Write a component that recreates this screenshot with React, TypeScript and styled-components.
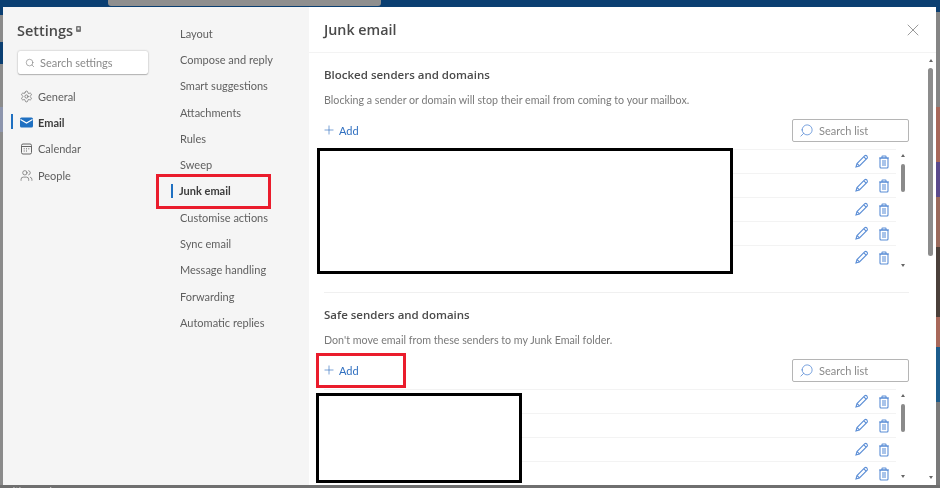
import styled, { createGlobalStyle } from "styled-components";
import { Settings, Users, Plus, X, Search } from "lucide-react";

const Global = createGlobalStyle`
  html, body {
    margin: 0;
    padding: 0;
    background: #8a8a8a;
  }
`;

const Page = styled.div`
  position: relative;
  width: 940px;
  height: 488px;
  overflow: hidden;
  display: flex;
  flex-direction: column;
  font-family: Lato, "Open Sans", sans-serif;
  filter: blur(0.3px);
`;

const TopBar = styled.div`
  height: 7px;
  background: #0b3f72;
  flex: none;
  display: flex;
`;

const BrowserTab = styled.div`
  width: 273px;
  height: 6px;
  margin-left: 108px;
  background: #8f8f8f;
  border-radius: 0 0 3px 3px;
`;

const Middle = styled.div`
  flex: 1;
  min-height: 0;
  display: flex;
`;

const LeftEdge = styled.div`
  width: 3px;
  flex: none;
  background: linear-gradient(
    180deg,
    #0b3f72 0 8px,
    #8b8b8b 8px 35px,
    #0b3f72 35px 57px,
    #8b8b8b 57px 100px,
    #8d95ad 100px 125px,
    #8b8b8b 125px
  );
`;

const RightEdge = styled.div`
  width: 4px;
  flex: none;
  background: linear-gradient(
    180deg,
    #0b3f72 0 5px,
    #858585 5px 100px,
    #a8685a 100px 155px,
    #5b4a8c 155px 190px,
    #9a6a5c 190px 240px,
    #4b403a 240px 310px,
    #a8685a 310px 340px,
    #1c5c8c 340px 395px,
    #7a7a7a 395px
  );
`;

const BottomBar = styled.div`
  height: 3px;
  flex: none;
  background: #6f6f6f;
  overflow: hidden;
  padding-left: 5px;
  font-size: 10px;
  line-height: 10px;
  color: #d0d0d0;
`;

const Dialog = styled.div`
  flex: 1;
  min-width: 0;
  display: flex;
  background: #ffffff;
`;

const NavPanel = styled.nav`
  width: 306px;
  flex: none;
  display: flex;
  background: #f5f5f5;
`;

const PrimaryColumn = styled.div`
  width: 149px;
  flex: none;
  padding: 13px 0 0 14px;
  box-sizing: border-box;
`;

const TitleRow = styled.div`
  display: flex;
  align-items: flex-start;
  gap: 3px;
  height: 20px;
  margin-top: 1px;
`;

const Title = styled.h1`
  margin: 0;
  font-family: "Open Sans", sans-serif;
  font-size: 14.5px;
  line-height: 20px;
  font-weight: 600;
  color: #4a4a4a;
`;

const SettingsSearch = styled.div`
  width: 130px;
  height: 23px;
  margin: 10px 0 9px 1px;
  padding-left: 7px;
  box-sizing: border-box;
  display: flex;
  align-items: center;
  gap: 5px;
  background: #ffffff;
  border-radius: 2px;
  box-shadow: 0 0 2px rgba(0, 0, 0, 0.3), 0 1px 1px rgba(0, 0, 0, 0.2);
  font-size: 11px;
  color: #8a8a8a;
`;

const PrimaryItem = styled.div<{ $active?: boolean }>`
  position: relative;
  height: 26.3px;
  display: flex;
  align-items: center;
  gap: 5px;
  padding-left: 3px;
  font-size: 11px;
  font-weight: ${(p) => (p.$active ? 700 : 400)};
  color: ${(p) => (p.$active ? "#3d3d3d" : "#5f5f5f")};

  ${(p) =>
    p.$active &&
    `&::before {
      content: "";
      position: absolute;
      left: -6px;
      top: 5px;
      width: 2px;
      height: 15px;
      background: #1f70c1;
    }`}
`;

const SecondaryColumn = styled.div`
  flex: 1;
  padding: 13px 0 0 28px;
`;

const SecondaryItem = styled.div<{ $active?: boolean }>`
  position: relative;
  height: 26.3px;
  display: flex;
  align-items: center;
  font-size: 11px;
  font-weight: ${(p) => (p.$active ? 700 : 400)};
  color: ${(p) => (p.$active ? "#3d3d3d" : "#5f5f5f")};
  margin-left: ${(p) => (p.$active ? "-1px" : "0")};

  ${(p) =>
    p.$active &&
    `&::before {
      content: "";
      position: absolute;
      left: -8px;
      top: 6px;
      width: 2px;
      height: 14px;
      background: #1f70c1;
    }`}
`;

const Content = styled.main`
  flex: 1;
  min-width: 0;
  display: flex;
  flex-direction: column;
`;

const Header = styled.header`
  height: 46px;
  flex: none;
  box-sizing: border-box;
  padding: 0 13px 0 15px;
  display: flex;
  align-items: center;
  justify-content: space-between;
  border-bottom: 1px solid #f3f3f3;
`;

const HeaderTitle = styled.h2`
  margin: 0;
  font-family: "Open Sans", sans-serif;
  font-size: 14.3px;
  font-weight: 600;
  color: #4a4a4a;
`;

const ScrollArea = styled.div`
  flex: 1;
  min-height: 0;
  display: flex;
`;

const Sections = styled.div`
  flex: 1;
  min-width: 0;
  padding: 0 16px 0 15px;
  overflow: hidden;
`;

const Section = styled.section<{ $divided?: boolean }>`
  padding-top: 12px;
  border-top: ${(p) => (p.$divided ? "1px solid #f0f0f0" : "none")};
  margin-top: ${(p) => (p.$divided ? "23px" : "0")};
`;

const SectionTitle = styled.h3`
  margin: 0;
  height: 20px;
  font-family: "Open Sans", sans-serif;
  font-size: 11.5px;
  line-height: 20px;
  font-weight: 600;
  color: #4a4a4a;
`;

const Description = styled.p`
  margin: 5px 0 0;
  height: 20px;
  font-size: 10.7px;
  line-height: 20px;
  color: #7a7a7a;
`;

const ToolRow = styled.div`
  height: 24px;
  margin-top: 8px;
  display: flex;
  align-items: center;
  justify-content: space-between;
`;

const AddButton = styled.div`
  display: flex;
  align-items: center;
  gap: 3px;
  color: #2f6fc0;
  font-size: 11px;
`;

const AddPlus = styled(Plus)`
  margin-left: -2px;
`;

const ListSearch = styled.div`
  width: 117px;
  height: 23px;
  box-sizing: border-box;
  padding-left: 6px;
  display: flex;
  align-items: center;
  gap: 5px;
  border: 1px solid #b5b5b5;
  border-radius: 2px;
  color: #8a8a8a;
  font-size: 11px;
`;

const FlippedSearch = styled(Search)`
  transform: scaleX(-1);
`;

const ListWrap = styled.div<{ $tall?: boolean }>`
  margin-top: 7px;
  height: ${(p) => (p.$tall ? "120px" : "96px")};
  display: flex;
`;

const Rows = styled.div`
  width: 572px;
  flex: none;
`;

const Row = styled.div`
  height: 24px;
  box-sizing: border-box;
  border-top: 1px solid #f3f3f3;
  display: flex;
  align-items: center;
  justify-content: flex-end;
  gap: 9px;
  padding-right: 6px;
`;

const MiniScroll = styled.div`
  width: 13px;
  flex: none;
  display: flex;
  flex-direction: column;
  align-items: center;
  position: relative;
`;

const Arrow = styled.span<{ $down?: boolean; $top: number }>`
  position: absolute;
  top: ${(p) => p.$top}px;
  width: 0;
  height: 0;
  border-left: 2px solid transparent;
  border-right: 2px solid transparent;
  ${(p) => (p.$down ? "border-top: 3px solid #666;" : "border-bottom: 3px solid #666;")}
`;

const MiniThumb = styled.div<{ $height: number; $top: number }>`
  position: absolute;
  top: ${(p) => p.$top}px;
  width: 4px;
  height: ${(p) => p.$height}px;
  border-radius: 2px;
  background: #8a8a8a;
`;

const MainScroll = styled.div`
  width: 11px;
  flex: none;
  position: relative;
  display: flex;
  justify-content: center;
`;

const MainThumb = styled.div`
  position: absolute;
  top: 15px;
  width: 5px;
  height: 188px;
  border-radius: 3px;
  background: #8c8c8c;
`;

const Redaction = styled.div<{ $x: number; $y: number; $w: number; $h: number }>`
  position: absolute;
  left: ${(p) => p.$x}px;
  top: ${(p) => p.$y}px;
  width: ${(p) => p.$w}px;
  height: ${(p) => p.$h}px;
  box-sizing: border-box;
  background: #ffffff;
  border: 3px solid #000000;
`;

const Highlight = styled.div<{ $x: number; $y: number; $w: number; $h: number }>`
  position: absolute;
  left: ${(p) => p.$x}px;
  top: ${(p) => p.$y}px;
  width: ${(p) => p.$w}px;
  height: ${(p) => p.$h}px;
  box-sizing: border-box;
  border: 3px solid #ea1c2c;
`;

const PencilIcon = () => (
  <svg width="15" height="15" viewBox="0 0 15 15" fill="none" stroke="#5b8ed6" strokeWidth="1.1">
    <path d="M2 13 L3 9.5 L10.8 1.7 Q11.8 1 12.9 2 Q13.8 3.1 13.2 4.1 L5.4 11.9 Z" />
    <path d="M9.8 2.8 L12.2 5.2" />
    <path d="M3 9.5 L5.4 11.9" />
  </svg>
);

const TrashIcon = () => (
  <svg width="12" height="14" viewBox="0 0 12 14" fill="none" stroke="#5b8ed6" strokeWidth="1.1">
    <path d="M1 3 H11" />
    <path d="M4 3 V1.5 Q4 1 4.5 1 H7.5 Q8 1 8 1.5 V3" />
    <rect x="2" y="3" width="8" height="10" rx="1" />
    <rect x="4" y="5" width="4" height="6" fill="#a9c4ea" stroke="none" />
  </svg>
);

const MailIcon = () => (
  <svg width="13" height="11" viewBox="0 0 13 11">
    <rect x="0" y="0.5" width="13" height="10" rx="1.5" fill="#1f70c1" />
    <path d="M0.5 2.5 L6.5 6 L12.5 2.5" fill="none" stroke="#fff" strokeWidth="1.1" />
  </svg>
);

const CalendarIcon = () => (
  <svg width="13" height="12" viewBox="0 0 13 12" fill="none" stroke="#666" strokeWidth="1">
    <rect x="1.5" y="1" width="10" height="10" rx="1.5" />
    <path d="M1.5 3.5 H11.5" />
    <path d="M3.7 5.8 H4.7 M6 5.8 H7 M8.3 5.8 H9.3 M3.7 8 H4.7 M6 8 H7" />
  </svg>
);

const PremiumMark = () => (
  <svg width="5" height="6" viewBox="0 0 5 6" style={{ marginTop: 5 }}>
    <rect x="0" y="0" width="5" height="6" rx="1" fill="#777" />
    <rect x="1.5" y="1.5" width="2" height="2" fill="#eee" />
  </svg>
);

const primaryNav = [
  { label: "General", icon: <Settings size={13} color="#666" strokeWidth={1.3} /> },
  { label: "Email", icon: <MailIcon />, active: true },
  { label: "Calendar", icon: <CalendarIcon /> },
  { label: "People", icon: <Users size={13} color="#666" strokeWidth={1.3} /> },
];

const secondaryNav = [
  "Layout",
  "Compose and reply",
  "Smart suggestions",
  "Attachments",
  "Rules",
  "Sweep",
  "Junk email",
  "Customise actions",
  "Sync email",
  "Message handling",
  "Forwarding",
  "Automatic replies",
];

const SenderList = ({ count, thumbTop, thumbHeight, downAt }: { count: number; thumbTop: number; thumbHeight: number; downAt: number }) => (
  <ListWrap $tall={count === 5}>
    <Rows>
      {Array.from({ length: count }).map((_, i) => (
        <Row key={i}>
          <PencilIcon />
          <TrashIcon />
        </Row>
      ))}
    </Rows>
    <MiniScroll>
      <Arrow $top={5} />
      <MiniThumb $top={thumbTop} $height={thumbHeight} />
      <Arrow $down $top={downAt} />
    </MiniScroll>
  </ListWrap>
);

const Toolbar = () => (
  <ToolRow>
    <AddButton>
      <AddPlus size={14} strokeWidth={1.1} />
      Add
    </AddButton>
    <ListSearch>
      <FlippedSearch size={15} color="#5b8ed6" strokeWidth={1.3} />
      Search list
    </ListSearch>
  </ToolRow>
);

export default function App() {
  return (
    <Page>
      <Global />
      <TopBar>
        <BrowserTab />
      </TopBar>
      <Middle>
        <LeftEdge />
        <Dialog>
          <NavPanel>
            <PrimaryColumn>
              <TitleRow>
                <Title>Settings</Title>
                <PremiumMark />
              </TitleRow>
              <SettingsSearch>
                <Search size={10} color="#777" strokeWidth={1.4} />
                Search settings
              </SettingsSearch>
              {primaryNav.map((item) => (
                <PrimaryItem key={item.label} $active={item.active}>
                  {item.icon}
                  {item.label}
                </PrimaryItem>
              ))}
            </PrimaryColumn>
            <SecondaryColumn>
              {secondaryNav.map((label) => (
                <SecondaryItem key={label} $active={label === "Junk email"}>
                  {label}
                </SecondaryItem>
              ))}
            </SecondaryColumn>
          </NavPanel>
          <Content>
            <Header>
              <HeaderTitle>Junk email</HeaderTitle>
              <X size={20} color="#777" strokeWidth={0.9} />
            </Header>
            <ScrollArea>
              <Sections>
                <Section>
                  <SectionTitle>Blocked senders and domains</SectionTitle>
                  <Description>Blocking a sender or domain will stop their email from coming to your mailbox.</Description>
                  <Toolbar />
                  <SenderList count={5} thumbTop={15} thumbHeight={28} downAt={115} />
                </Section>
                <Section $divided>
                  <SectionTitle>Safe senders and domains</SectionTitle>
                  <Description>Don't move email from these senders to my Junk Email folder.</Description>
                  <Toolbar />
                  <SenderList count={4} thumbTop={15} thumbHeight={28} downAt={86} />
                </Section>
              </Sections>
              <MainScroll>
                <Arrow $top={6} />
                <MainThumb />
                <Arrow $down $top={423} />
              </MainScroll>
            </ScrollArea>
          </Content>
        </Dialog>
        <RightEdge />
      </Middle>
      <BottomBar>with premium</BottomBar>
      <Highlight $x={156} $y={174} $w={115} $h={35} />
      <Highlight $x={316} $y={353} $w={90} $h={35} />
      <Redaction $x={317} $y={148} $w={416} $h={126} />
      <Redaction $x={316} $y={393} $w={206} $h={90} />
    </Page>
  );
}
